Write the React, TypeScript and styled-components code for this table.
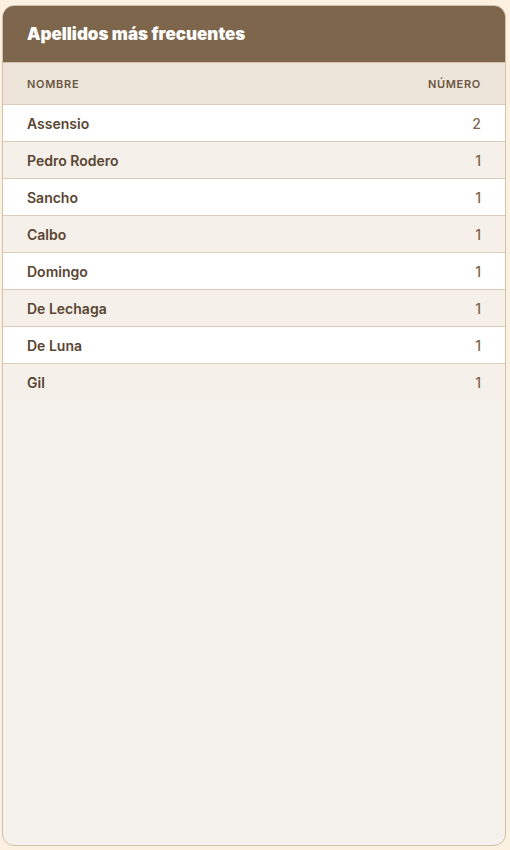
import styled, { createGlobalStyle } from 'styled-components';

const GlobalStyle = createGlobalStyle`
  html, body {
    margin: 0;
    padding: 0;
    background: #fcf0e0;
    font-family: Inter, "Noto Sans", sans-serif;
  }
`;

const Page = styled.div`
  height: 100vh;
  box-sizing: border-box;
  padding: 5px 4px 4px 2px;
  display: flex;
`;

const Card = styled.section`
  flex: 1;
  display: flex;
  flex-direction: column;
  background: #f5f1ec;
  border: 1px solid #d3c1ab;
  border-radius: 12px;
  overflow: hidden;
`;

const Header = styled.header`
  background: #7d664b;
  height: 56px;
  display: flex;
  align-items: center;
  padding: 0 24px;
  border-bottom: 1px solid #d3c1ab;
`;

const Title = styled.h2`
  margin: 0;
  color: #ffffff;
  font-size: 17px;
  font-weight: 900;
  letter-spacing: 0;
`;

const Row = styled.div<{ $variant: 'head' | 'even' | 'odd' }>`
  display: flex;
  justify-content: space-between;
  align-items: center;
  padding: 0 24px;
  height: ${({ $variant }) => ($variant === 'head' ? '41px' : '36px')};
  background: ${({ $variant }) =>
    $variant === 'head' ? '#ede4da' : $variant === 'odd' ? '#ffffff' : '#f5f0ea'};
  border-bottom: 1px solid #dccdb9;
  &:last-child {
    border-bottom: none;
  }
`;

const HeadCell = styled.span`
  font-size: 11px;
  font-weight: 600;
  text-transform: uppercase;
  letter-spacing: 0.7px;
  color: #6b5742;
`;

const Cell = styled.span<{ $num?: boolean }>`
  font-size: 14px;
  font-weight: ${({ $num }) => ($num ? 500 : 600)};
  color: ${({ $num }) => ($num ? '#7d664b' : '#594532')};
`;

const data: [string, number][] = [
  ['Assensio', 2],
  ['Pedro Rodero', 1],
  ['Sancho', 1],
  ['Calbo', 1],
  ['Domingo', 1],
  ['De Lechaga', 1],
  ['De Luna', 1],
  ['Gil', 1],
];

export default function App() {
  return (
    <>
      <GlobalStyle />
      <Page>
        <Card>
          <Header>
            <Title>Apellidos más frecuentes</Title>
          </Header>
          <div>
            <Row $variant="head">
              <HeadCell>Nombre</HeadCell>
              <HeadCell>Número</HeadCell>
            </Row>
            {data.map(([name, n], i) => (
              <Row key={name} $variant={i % 2 === 0 ? 'odd' : 'even'}>
                <Cell>{name}</Cell>
                <Cell $num>{n}</Cell>
              </Row>
            ))}
          </div>
        </Card>
      </Page>
    </>
  );
}
